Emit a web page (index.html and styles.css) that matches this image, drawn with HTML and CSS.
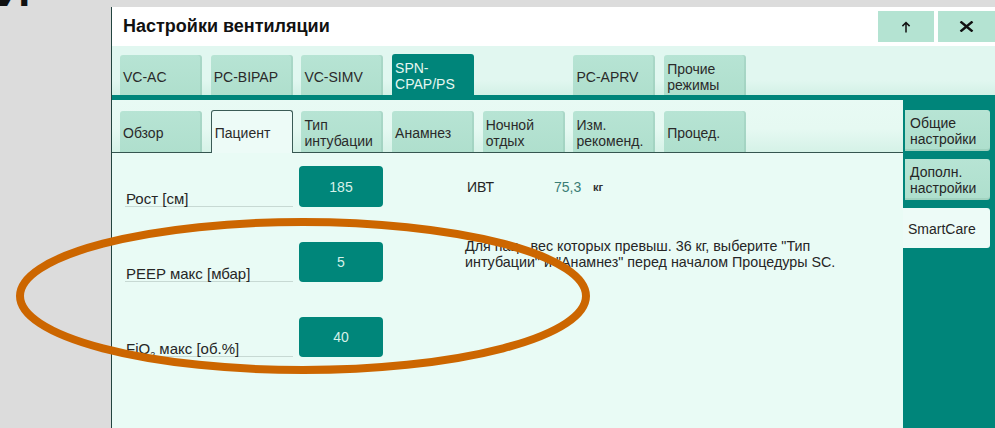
FILE: index.html
```html
<!DOCTYPE html>
<html lang="ru">
<head>
<meta charset="utf-8">
<title>Настройки вентиляции</title>
<link rel="stylesheet" href="styles.css">
</head>
<body>
<div class="page">
  <div class="gutter"><span class="letter">И</span></div>

  <section class="panel">
    <header class="head">
      <h1 class="title">Настройки вентиляции</h1>
      <div class="head-actions">
        <button class="head-btn" type="button" aria-label="Вверх">
          <svg width="12" height="12" viewBox="0 0 12 12"><path d="M6 11.5V1.5M2.4 5.1L6 1.5L9.6 5.1" fill="none" stroke="#111" stroke-width="1.5"/></svg>
        </button>
        <button class="head-btn" type="button" aria-label="Закрыть">
          <svg width="15" height="11" viewBox="0 0 15 11"><path d="M1.5 0.5L13.5 10.5M13.5 0.5L1.5 10.5" fill="none" stroke="#111" stroke-width="2.4"/></svg>
        </button>
      </div>
    </header>

    <nav class="modes">
      <div class="tab">VC-AC</div>
      <div class="tab">PC-BIPAP</div>
      <div class="tab">VC-SIMV</div>
      <div class="tab tab-on">SPN-<br>CPAP/PS</div>
      <div class="tab tab-empty"></div>
      <div class="tab">PC-APRV</div>
      <div class="tab">Прочие<br>режимы</div>
    </nav>

    <div class="body">
      <div class="sheet">
        <nav class="subtabs">
          <div class="tab">Обзор</div>
          <div class="tab sub-on">Пациент</div>
          <div class="tab">Тип<br>интубации</div>
          <div class="tab">Анамнез</div>
          <div class="tab">Ночной<br>отдых</div>
          <div class="tab">Изм.<br>рекоменд.</div>
          <div class="tab">Процед.</div>
        </nav>

        <div class="fields">
          <div class="label row-1">Рост [см]</div>
          <div class="value row-1">185</div>
          <div class="info-ibw">
            <span class="ibw-name">ИВТ</span>
            <span class="ibw-num">75,3</span>
            <span class="ibw-unit">кг</span>
          </div>

          <div class="label row-2">PEEP макс [мбар]</div>
          <div class="value row-2">5</div>
          <p class="note">Для пац., вес которых превыш. 36 кг, выберите "Тип интубации" и "Анамнез" перед началом Процедуры SC.</p>

          <div class="label row-3">FiO<sub>2</sub> макс [об.%]</div>
          <div class="value row-3">40</div>
        </div>
      </div>

      <aside class="side">
        <div class="side-tab">Общие<br>настройки</div>
        <div class="side-tab">Дополн.<br>настройки</div>
        <div class="side-tab side-on">SmartCare</div>
      </aside>
    </div>
  </section>

  <svg class="mark" width="995" height="428" viewBox="0 0 995 428">
    <ellipse cx="303" cy="296" rx="283" ry="74" fill="none" stroke="#cc6600" stroke-width="8"/>
  </svg>
</div>
</body>
</html>
```

FILE: styles.css
```css
* { box-sizing: border-box; }

html, body {
  margin: 0;
  padding: 0;
}

body {
  width: 995px;
  height: 428px;
  overflow: hidden;
  background: #dcdcdc;
  font-family: "Liberation Sans", Arial, sans-serif;
  font-size: 14px;
  color: #242424;
}

.page {
  position: relative;
  display: grid;
  grid-template-columns: 111px 884px;
  height: 428px;
}

/* left gray margin with the cut-off heading letter */
.gutter {
  overflow: hidden;
}

.letter {
  display: block;
  margin: -34px 0 0 -4px;
  font-size: 48px;
  line-height: 48px;
  font-weight: bold;
  color: #111;
}

/* settings window */
.panel {
  margin-top: 7px;
  display: flex;
  flex-direction: column;
  border-left: 1px solid #23443f;
  background: #ffffff;
  min-height: 0;
}

.head {
  height: 39px;
  display: flex;
  align-items: center;
  justify-content: space-between;
  padding: 4px 0 4px 11px;
}

.title {
  margin: 0;
  font-size: 18px;
  font-weight: bold;
  color: #111;
}

.head-actions {
  display: flex;
  gap: 4px;
  height: 31px;
}

.head-btn {
  width: 56px;
  height: 31px;
  border: 0;
  padding: 0;
  background: #b4e3d2;
  display: flex;
  align-items: center;
  justify-content: center;
}

.head-btn + .head-btn { width: 57px; }

/* tab rows */
.tab {
  width: 82px;
  flex: none;
  display: flex;
  align-items: center;
  padding: 0 3px;
  line-height: 16px;
  border-radius: 3px 3px 0 0;
  background: linear-gradient(#b7e4d4, #afdfcd);
  box-shadow: inset -2px 0 0 rgba(0, 60, 40, 0.07);
  color: #2a2a2a;
}

.modes {
  height: 49px;
  display: flex;
  align-items: flex-end;
  gap: 8.7px;
  padding-left: 8px;
  background: linear-gradient(#e1f7f0 0, #e1f7f0 70%, #d3f1e6 100%);
}

.modes .tab {
  height: 40px;
  padding-top: 3px;
}

.modes .tab-on {
  background: #00857a;
  color: #e6f7f1;
  box-shadow: none;
  height: 41px;
  padding-top: 2px;
}

.modes .tab-empty {
  background: transparent;
  box-shadow: none;
}

.body {
  flex: 1;
  display: grid;
  grid-template-columns: 791px 92px;
  padding-top: 5px;
  background: #00857a;
  min-height: 0;
}

.sheet {
  background: #e9fbf5;
  display: flex;
  flex-direction: column;
}

.subtabs {
  height: 53px;
  display: flex;
  align-items: flex-end;
  gap: 8.7px;
  padding-left: 8px;
  border-bottom: 1px solid #35554f;
  background: linear-gradient(#e8faf4 0, #e6f9f2 55%, #d5f2e7 100%);
}

.subtabs .tab {
  height: 41px;
  padding-top: 2px;
}

.subtabs .sub-on {
  height: 43px;
  margin-bottom: -1px;
  background: #edfbf7;
  border: 1px solid #3b5b56;
  border-bottom: 0;
  box-shadow: none;
  padding-top: 2px;
}

/* patient fields */
.fields {
  display: grid;
  grid-template-columns: 168px 84px 1fr;
  grid-template-rows: 41px 40px 40px;
  column-gap: 6px;
  row-gap: 35px;
  padding: 13px 0 0 13px;
}

.row-1 { grid-row: 1; }
.row-2 { grid-row: 2; }
.row-3 { grid-row: 3; }

.label {
  grid-column: 1;
  display: flex;
  align-items: flex-end;
  font-size: 15px;
  line-height: 12px;
  padding-left: 1px;
  padding-bottom: 1px;
  border-bottom: 1px solid #c7d9d3;
  color: #262626;
  white-space: pre;
}

.label sub {
  font-size: 9px;
  vertical-align: baseline;
  line-height: 0;
}

.value {
  grid-column: 2;
  display: flex;
  align-items: center;
  justify-content: center;
  border-radius: 4px;
  background: #00867a;
  color: #d6f1e9;
}

.info-ibw {
  grid-column: 3;
  grid-row: 1;
  display: flex;
  align-items: center;
  padding-left: 77px;
}

.ibw-name { width: 88px; padding-left: 1px; }

.ibw-num {
  width: 39px;
  color: #3a7d75;
}

.ibw-unit {
  font-size: 11px;
  font-weight: bold;
  color: #333;
}

.note {
  grid-column: 3;
  grid-row: 2 / span 2;
  margin: -4px 0 0 0;
  padding-left: 76px;
  width: 480px;
  font-size: 14.3px;
  line-height: 16px;
  color: #262626;
}

/* right-hand section tabs */
.side {
  display: flex;
  flex-direction: column;
  gap: 8px;
  padding: 10px 5px 0 0;
}

.side-tab {
  height: 41px;
  margin-left: 2px;
  padding: 1px 0 0 5px;
  display: flex;
  align-items: center;
  line-height: 16px;
  border-radius: 0 3px 3px 0;
  background: linear-gradient(#b7e4d4, #aedfcd);
  box-shadow: inset 0 -2px 0 rgba(0, 60, 40, 0.08);
  color: #262626;
}

.side-on {
  margin-left: 0;
  height: 40px;
  background: #edfbf7;
  box-shadow: none;
}

/* annotation ring over the window */
.mark {
  position: absolute;
  left: 0;
  top: 0;
  pointer-events: none;
}
```
